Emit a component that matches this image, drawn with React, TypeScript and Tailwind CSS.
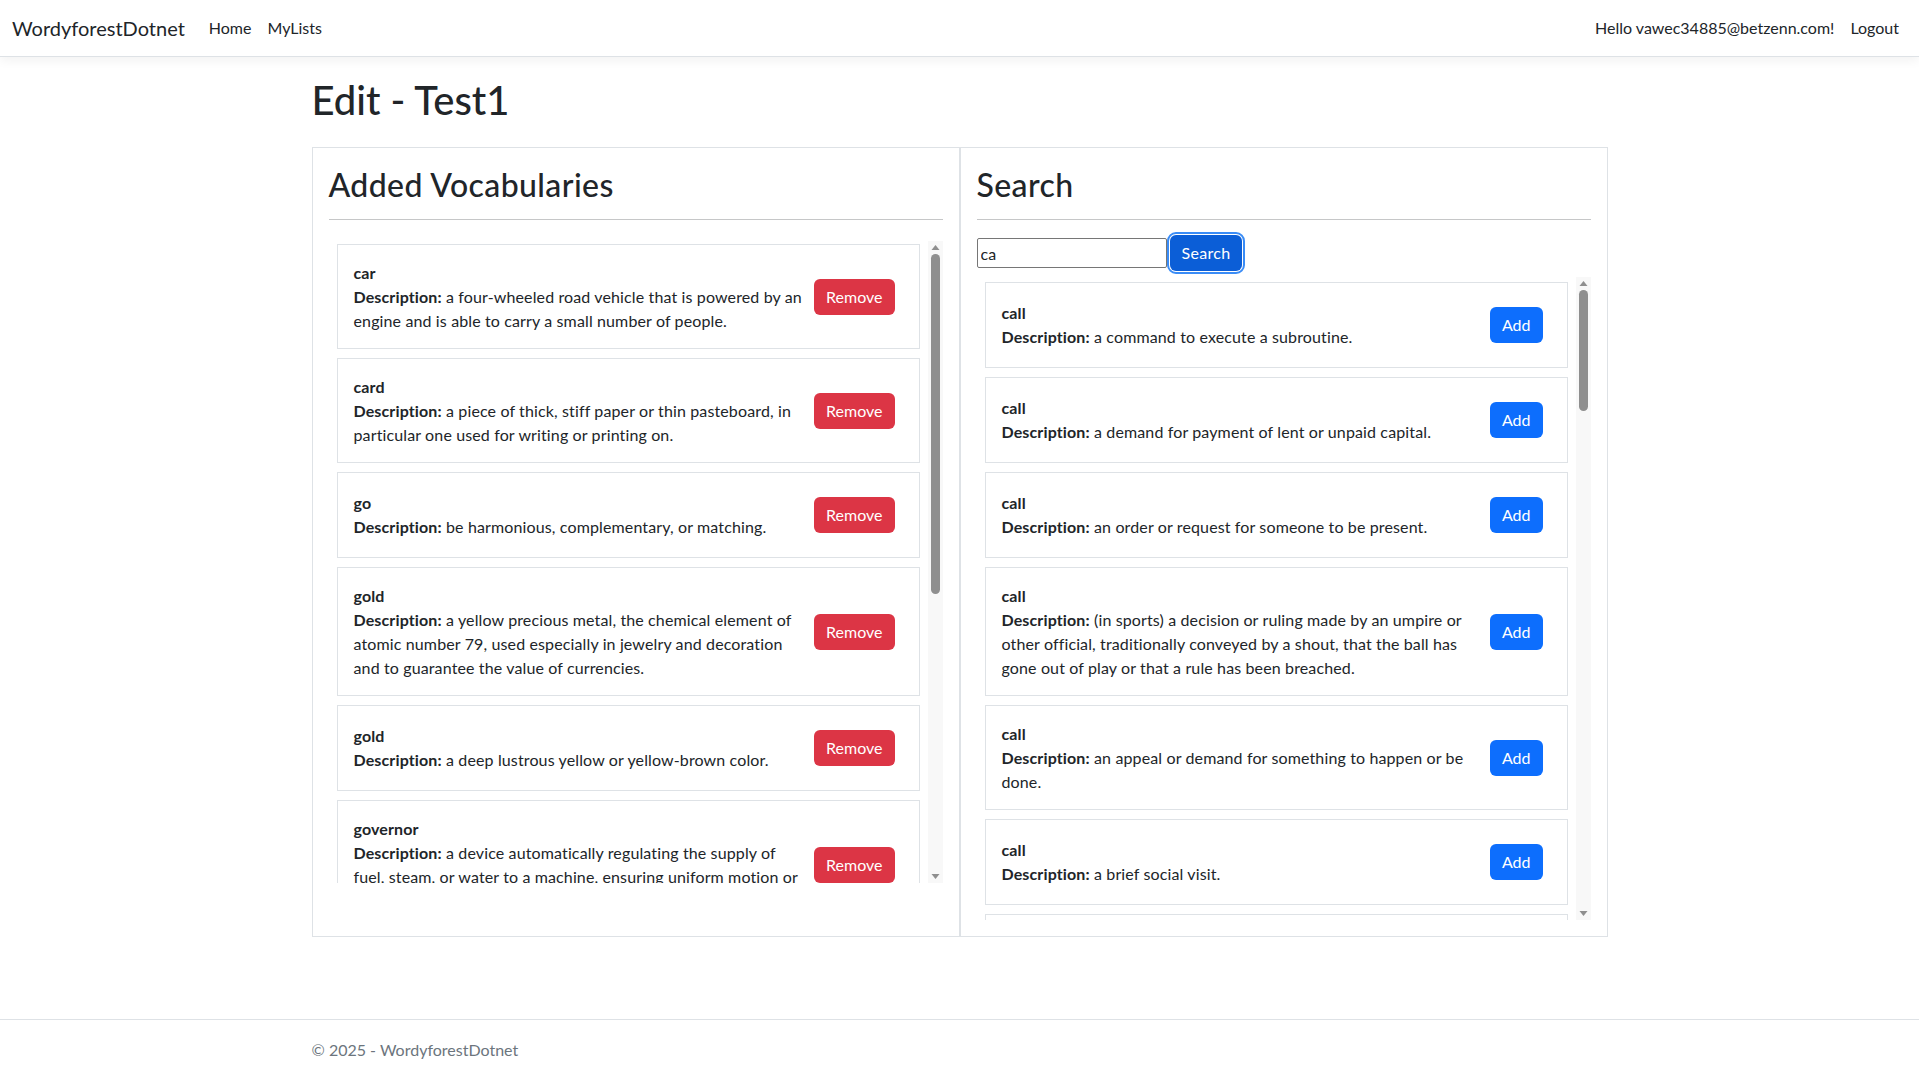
import React from 'react';

type Word = { word: string; desc: string };

const added: Word[] = [
  { word: 'car', desc: 'a four-wheeled road vehicle that is powered by an engine and is able to carry a small number of people.' },
  { word: 'card', desc: 'a piece of thick, stiff paper or thin pasteboard, in particular one used for writing or printing on.' },
  { word: 'go', desc: 'be harmonious, complementary, or matching.' },
  { word: 'gold', desc: 'a yellow precious metal, the chemical element of atomic number 79, used especially in jewelry and decoration and to guarantee the value of currencies.' },
  { word: 'gold', desc: 'a deep lustrous yellow or yellow-brown color.' },
  { word: 'governor', desc: 'a device automatically regulating the supply of fuel, steam, or water to a machine, ensuring uniform motion or limiting speed.' },
];

const results: Word[] = [
  { word: 'call', desc: 'a command to execute a subroutine.' },
  { word: 'call', desc: 'a demand for payment of lent or unpaid capital.' },
  { word: 'call', desc: 'an order or request for someone to be present.' },
  { word: 'call', desc: '(in sports) a decision or ruling made by an umpire or other official, traditionally conveyed by a shout, that the ball has gone out of play or that a rule has been breached.' },
  { word: 'call', desc: 'an appeal or demand for something to happen or be done.' },
  { word: 'call', desc: 'a brief social visit.' },
  { word: 'call', desc: 'a telephone communication.' },
];

const VocabCard = ({ item, action }: { item: Word; action: 'remove' | 'add' }) => (
  <div className="mx-2 mb-[9px] min-h-[86px] border border-[#dee2e6] px-4 py-[15.5px] flex items-center">
    <div className="flex-1 leading-6 tracking-[0.13px]">
      <div className="font-bold">{item.word}</div>
      <div>
        <span className="font-bold">Description:</span> {item.desc}
      </div>
    </div>
    {action === 'remove' ? (
      <button className="mx-2 rounded-[6px] bg-[#dc3545] px-3 py-1.5 leading-6 text-white">Remove</button>
    ) : (
      <button className="mx-2 rounded-[6px] bg-[#0d6efd] px-3 py-1.5 leading-6 text-white">Add</button>
    )}
  </div>
);

// drawn stand-in for the browser's scrollbar (headless hides the native one)
const ScrollTrack = ({ thumb }: { thumb: number }) => (
  <div className="w-[15px] h-full bg-[#f8f8f8] flex flex-col items-center">
    <svg width="15" height="12" viewBox="0 0 15 12">
      <polygon points="3.5,9 11.5,9 7.5,4" fill="#8f8f8f" />
    </svg>
    <div className="mt-[1px] w-[9px] rounded-full bg-[#8f8f8f]" style={{ height: thumb }} />
    <div className="flex-1" />
    <svg width="15" height="12" viewBox="0 0 15 12">
      <polygon points="3.5,3 11.5,3 7.5,8" fill="#8f8f8f" />
    </svg>
  </div>
);

export default function App() {
  return (
    <div className="min-h-screen flex flex-col bg-white text-[16px] text-[#212529]" style={{ fontFamily: '"Segoe UI", Lato, "Liberation Sans", sans-serif' }}>
      <header className="h-[57px] flex items-center px-3 border-b border-[#dee2e6] shadow-[0_4px_10px_rgba(0,0,0,0.05)]">
        <a className="text-[20px] mr-4">WordyforestDotnet</a>
        <nav className="flex">
          <a className="px-2">Home</a>
          <a className="px-2">MyLists</a>
        </nav>
        <div className="ml-auto flex">
          <span className="px-2">Hello vawec34885@betzenn.com!</span>
          <a className="px-2">Logout</a>
        </div>
      </header>

      <main className="flex-1 w-[1320px] mx-auto px-3 pt-[19px] pb-4">
        <h1 className="text-[40px] font-medium leading-[1.2] mb-[23px]">Edit - Test1</h1>
        <div className="grid grid-cols-2">
          <section className="border border-[#dee2e6] px-4 pt-[18px] pb-4">
            <h2 className="text-[32px] font-medium leading-[1.2] tracking-[0.4px]">Added Vocabularies</h2>
            <hr className="mt-[15px] border-t border-[#c6c7c8]" />
            <div className="mt-[21px] h-[642px] flex">
              <div className="flex-1 overflow-hidden pt-[3px]">
                {added.map((w, i) => (
                  <VocabCard key={i} item={w} action="remove" />
                ))}
              </div>
              <ScrollTrack thumb={340} />
            </div>
          </section>
          <section className="border border-[#dee2e6] px-4 pt-[18px] pb-4">
            <h2 className="text-[32px] font-medium leading-[1.2] tracking-[0.4px]">Search</h2>
            <hr className="mt-[15px] border-t border-[#c6c7c8]" />
            <div className="mt-[15px] flex items-center gap-[3px]">
              <input
                defaultValue="ca"
                className="w-[190px] h-[30px] border border-[#767676] rounded-[2px] px-[3px] text-[16px] outline-none"
              />
              <button className="rounded-[6px] bg-[#0b5ed7] px-3 py-1.5 leading-6 tracking-[0.3px] text-white outline-2 outline-[#3a8cf6] outline-offset-[1px]">
                Search
              </button>
            </div>
            <div className="mt-[6px] h-[643px] flex">
              <div className="flex-1 overflow-hidden pt-[5px]">
                {results.map((w, i) => (
                  <VocabCard key={i} item={w} action="add" />
                ))}
              </div>
              <ScrollTrack thumb={121} />
            </div>
          </section>
        </div>
      </main>

      <footer className="h-[60px] border-t border-[#dee2e6] leading-[60px] text-[#6c757d]">
        <div className="w-[1320px] mx-auto px-3">© 2025 - WordyforestDotnet</div>
      </footer>
    </div>
  );
}
